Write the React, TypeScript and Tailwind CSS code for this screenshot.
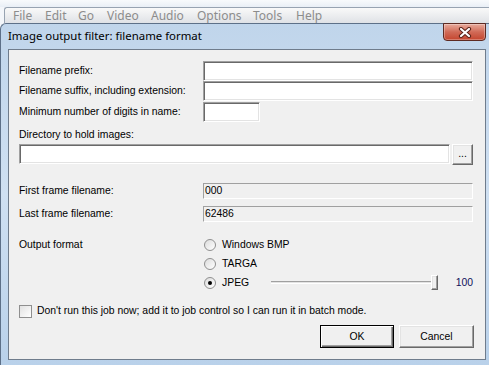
import React from "react";

const sunken =
  "bg-white border border-t-[#a0a0a0] border-l-[#a0a0a0] border-b-white border-r-white shadow-[inset_1px_1px_0_#696969,inset_-1px_-1px_0_#e3e3e3]";
const flat =
  "bg-[#f0f0f0] border border-t-[#a0a0a0] border-l-[#a0a0a0] border-b-white border-r-white";
const raised =
  "bg-[#f0f0f0] border border-t-white border-l-white border-b-[#696969] border-r-[#696969] shadow-[inset_-1px_-1px_0_#a0a0a0,inset_1px_1px_0_#e3e3e3]";

const menu = [
  ["File", "w-[32px]"],
  ["Edit", "w-[33px]"],
  ["Go", "w-[29px]"],
  ["Video", "w-[44px]"],
  ["Audio", "w-[46px]"],
  ["Options", "w-[56px]"],
  ["Tools", "w-[43px]"],
  ["Help", "w-[40px]"],
];

function Radio({ checked }: { checked?: boolean }) {
  return (
    <span className="ml-[1px] flex h-[12px] w-[12px] items-center justify-center rounded-full border border-[#8f8f8f] bg-gradient-to-br from-[#dcdcdc] to-white">
      {checked && <span className="h-[4px] w-[4px] rounded-full bg-black" />}
    </span>
  );
}

function FieldRow({ label, children, className = "" }: { label: string; children: React.ReactNode; className?: string }) {
  return (
    <div className={`flex items-center ${className}`}>
      <span className="w-[184px] whitespace-nowrap">{label}</span>
      {children}
    </div>
  );
}

export default function App() {
  return (
    <div className="h-[365px] w-[489px] overflow-hidden bg-[#f3f6fa] font-['Liberation_Sans',Arial,sans-serif] text-[10.4px] text-black">
      {/* parent window behind the dialog */}
      <div className="flex h-[23px] flex-col">
        <div className="h-[10px] bg-gradient-to-b from-[#f8fafc] to-[#e9eff6]" />
        <div className="ml-[4px] flex flex-1 items-start rounded-tl-[3px] border-l border-t border-[#97a3b1] bg-gradient-to-b from-[#f9f9f9] to-[#dfe2e6] pl-[8px] pt-[1px] font-['Noto_Sans',sans-serif] text-[12px] leading-[14px] text-[#8c8c8c]">
          {menu.map(([m, w]) => (
            <span key={m} className={w}>
              {m}
            </span>
          ))}
        </div>
      </div>

      {/* dialog */}
      <div className="flex h-[342px] flex-col rounded-tl-[6px] border-l border-t border-[#5d7088] bg-gradient-to-b from-[#c0d5eb] via-[#cfe0f2] to-[#b9d1ea]">
        <div className="flex h-[25px] items-start justify-between">
          <span className="pl-[7px] pt-[4px] font-['Noto_Sans',sans-serif] text-[11.4px] leading-[16px] text-black">
            Image output filter: filename format
          </span>
          <div className="-mt-[1px] mr-[3px] flex h-[18px] w-[43px] items-center justify-center rounded-b-[4px] border border-[#5e2a22] bg-gradient-to-b from-[#e8ab9d] via-[#d06a57] to-[#c4442d] shadow-[inset_0_0_0_1px_rgba(255,255,255,0.3)]">
            <svg width="14" height="11" viewBox="0 0 14 11">
              <path d="M3 2 L11 9 M11 2 L3 9" stroke="#5a2219" strokeWidth="4.2" strokeLinecap="round" />
              <path d="M3 2 L11 9 M11 2 L3 9" stroke="#ffffff" strokeWidth="2.2" strokeLinecap="round" />
            </svg>
          </div>
        </div>

        <div className="ml-[7px] h-[311px] w-[478px] border border-[#6f7c8c] bg-[#f0f0f0] pl-[10px] pr-[11px] pt-[11px] leading-[14px]">
          <FieldRow label="Filename prefix:" className="h-[20px]">
            <div className={`h-[20px] w-[270px] ${sunken}`} />
          </FieldRow>
          <FieldRow label="Filename suffix, including extension:" className="h-[20px]">
            <div className={`h-[20px] w-[270px] ${sunken}`} />
          </FieldRow>
          <FieldRow label="Minimum number of digits in name:" className="mt-[1px] h-[20px]">
            <div className={`h-[20px] w-[57px] ${sunken}`} />
          </FieldRow>

          <div className="mt-[6px] h-[14px]">Directory to hold images:</div>
          <div className="mt-[2px] flex h-[21px] items-start gap-[2px]">
            <div className={`h-[20px] w-[431px] ${sunken}`} />
            <div className={`flex h-[21px] w-[21px] items-center justify-center pb-[2px] ${raised}`}>...</div>
          </div>

          <FieldRow label="First frame filename:" className="mt-[18px] h-[16px]">
            <div className={`flex h-[16px] w-[270px] items-center pl-[1px] ${flat}`}>000</div>
          </FieldRow>
          <FieldRow label="Last frame filename:" className="mt-[7px] h-[16px]">
            <div className={`flex h-[16px] w-[270px] items-center pl-[1px] ${flat}`}>62486</div>
          </FieldRow>

          <div className="mt-[13px] flex">
            <span className="flex h-[19px] w-[184px] items-center">Output format</span>
            <div className="flex w-[270px] flex-col">
              <div className="flex h-[19px] items-center gap-[6px]">
                <Radio />
                <span>Windows BMP</span>
              </div>
              <div className="flex h-[19px] items-center gap-[6px]">
                <Radio />
                <span>TARGA</span>
              </div>
              <div className="flex h-[19px] items-center">
                <div className="flex w-[68px] items-center gap-[6px]">
                  <Radio checked />
                  <span>JPEG</span>
                </div>
                <div className="relative flex h-[19px] w-[167px] items-center">
                  <div className="h-[3px] w-full border-t border-t-[#a0a0a0] border-b border-b-white bg-[#e3e3e3]" />
                  <div className={`absolute right-0 top-[2px] h-[15px] w-[7px] ${raised}`} />
                </div>
                <span className="flex-1 text-right text-[#10105a]">100</span>
              </div>
            </div>
          </div>

          <div className="mt-[12px] flex h-[14px] items-center gap-[5px]">
            <span className="h-[13px] w-[13px] border border-[#8f8f8f] bg-gradient-to-br from-[#e2e2e2] to-white" />
            <span>Don't run this job now; add it to job control so I can run it in batch mode.</span>
          </div>

          <div className="mt-[7px] flex justify-end gap-[5px]">
            <div className="flex h-[23px] w-[74px] items-center justify-center border border-black bg-[#f0f0f0] shadow-[inset_1px_1px_0_#fff,inset_-1px_-1px_0_#696969,inset_-2px_-2px_0_#a0a0a0]">
              OK
            </div>
            <div className={`flex h-[23px] w-[75px] items-center justify-center ${raised}`}>Cancel</div>
          </div>
        </div>
      </div>
    </div>
  );
}
